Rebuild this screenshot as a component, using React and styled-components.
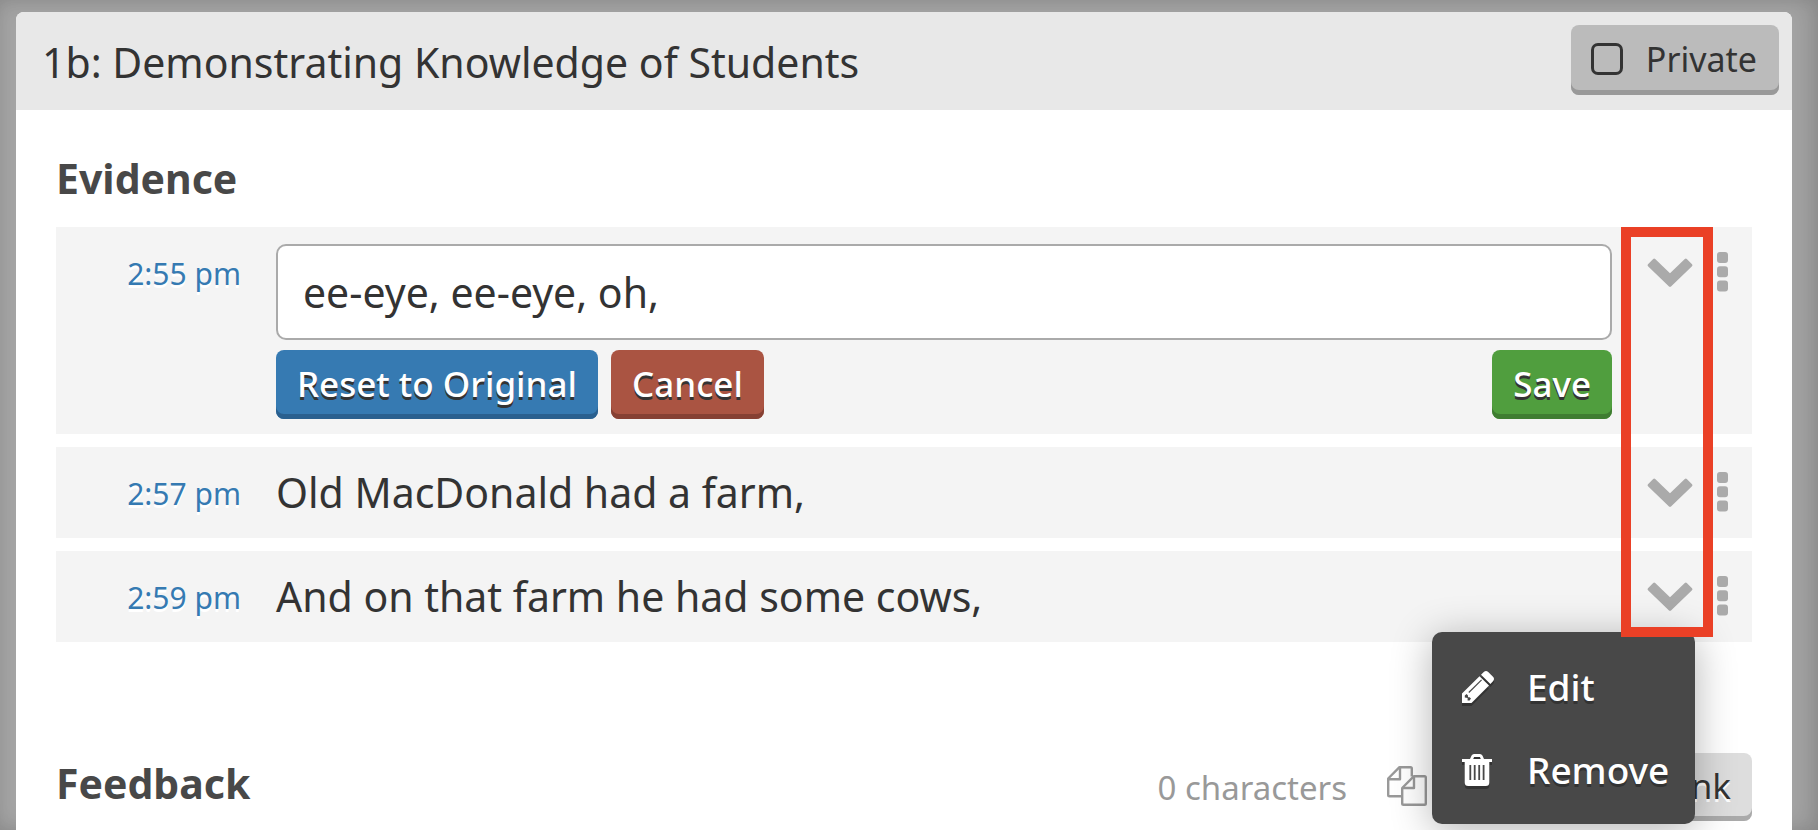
import React, { useState } from "react";
import styled, { createGlobalStyle } from "styled-components";

const GlobalStyle = createGlobalStyle`
  *, *::before, *::after { box-sizing: border-box; }
  body {
    margin: 0;
    background: #a4a4a4;
    color: #333;
    font-family: "Lucida Grande", "Noto Sans", sans-serif;
    font-size: 41px;
    overflow: hidden;
  }
  button, input { font-family: inherit; }
  h1, h2, ul { margin: 0; padding: 0; }
`;

const Backdrop = styled.main`
  height: 100vh;
  overflow: hidden;
  padding: 12px 26px 0 16px;
  box-shadow: inset -8px 0 24px rgba(0, 0, 0, 0.14), inset 0 0 14px rgba(0, 0, 0, 0.06);
`;

const Panel = styled.section`
  min-height: 100vh;
  border-radius: 8px 8px 0 0;
  background: #fff;
`;

const PanelHeader = styled.header`
  display: flex;
  align-items: flex-start;
  justify-content: space-between;
  padding: 13px 13px 11px 26px;
  border-radius: 8px 8px 0 0;
  background: #e8e8e8;
`;

const Title = styled.h1`
  font-size: 41px;
  line-height: 74px;
  font-weight: 400;
`;

const PrivateToggle = styled.label`
  display: flex;
  align-items: center;
  gap: 23px;
  height: 70px;
  padding: 0 22px 2px 20px;
  border-radius: 8px;
  background: #bbb;
  box-shadow: inset 0 -5px 0 #999;
  font-size: 34px;
  line-height: 64px;
`;

const Checkbox = styled.input`
  appearance: none;
  width: 32px;
  height: 32px;
  margin: 0;
  border: 3px solid #333;
  border-radius: 7px;
  &:checked { background: #333; }
`;

const PanelBody = styled.div`
  padding: 41px 40px 0;
`;

const Heading = styled.h2`
  color: #484848;
  font-size: 41px;
  line-height: 54px;
  font-weight: 700;
`;

const EvidenceList = styled.ul`
  position: relative;
  display: flex;
  flex-direction: column;
  gap: 13px;
  margin-top: 22px;
  list-style: none;
`;

const EvidenceRow = styled.li`
  position: relative;
  display: grid;
  grid-template-columns: 185px 1fr 140px;
  background: #f4f4f4;
`;

const Time = styled.a`
  padding: 20px 0 18px;
  color: #357ab2;
  font-size: 30px;
  line-height: 53px;
  text-align: right;
  text-decoration: none;
  text-shadow: 0 3px 0 #fff;
`;

const Entry = styled.div`
  padding: 19px 0 19px 35px;
  line-height: 53px;
`;

const Editor = styled.form`
  display: flex;
  flex-direction: column;
  gap: 10px;
  padding: 17px 0 15px 35px;
`;

const TextField = styled.input`
  width: 100%;
  height: 96px;
  padding: 0 25px;
  border: 2px solid #aaa;
  border-radius: 10px;
  background: #fff;
  color: #333;
  font-size: 41px;
`;

const ButtonRow = styled.div`
  display: flex;
  gap: 13px;
`;

const Button = styled.button`
  height: 69px;
  margin-left: ${(p) => (p.$end ? "auto" : "0")};
  padding: 0 21px 2px;
  border: 0;
  border-radius: 8px;
  background: ${(p) => p.$face};
  box-shadow: inset 0 -5px 0 ${(p) => p.$edge};
  color: #fff;
  font-size: 35px;
  line-height: 64px;
  font-weight: 500;
  text-shadow: 0 3px 0 #333;
`;

const Actions = styled.div`
  display: flex;
  align-items: flex-start;
  gap: 24px;
  padding: 25px 24px 0 35px;
`;

const IconButton = styled.button`
  display: flex;
  padding: 0;
  border: 0;
  background: none;
  color: ${(p) => p.$color || "#aaa"};
`;

const Highlight = styled.li`
  position: absolute;
  z-index: 3;
  top: 0;
  right: 39px;
  bottom: 5px;
  width: 92px;
  border: 10px solid #ea4026;
  pointer-events: none;
`;

const Menu = styled.div`
  position: absolute;
  z-index: 2;
  top: 81px;
  right: 57px;
  width: 263px;
  padding: 13px 0;
  border-radius: 10px;
  background: #484848;
  box-shadow: 0 6px 40px rgba(0, 0, 0, 0.3);
`;

const MenuItem = styled.button`
  display: grid;
  grid-template-columns: 65px 1fr;
  align-items: center;
  width: 100%;
  padding: 0 0 0 30px;
  border: 0;
  background: none;
  color: #fff;
  font-size: 37px;
  line-height: 83px;
  font-weight: 500;
  text-align: left;
  text-shadow: 0 3px 0 #333;
  svg { filter: drop-shadow(0 3px 0 #333); }
`;

const FeedbackBar = styled.div`
  display: flex;
  align-items: flex-start;
  margin-top: 111px;
`;

const FeedbackHeading = styled(Heading)`
  flex: 1;
  line-height: 60px;
`;

const CharacterCount = styled.span`
  color: #999;
  font-size: 33px;
  line-height: 70px;
`;

const CopyButton = styled(IconButton)`
  margin: 13px 13px 0 40px;
`;

const LinkButton = styled.button`
  width: 312px;
  height: 68px;
  padding: 0 21px 2px;
  border: 0;
  border-radius: 8px;
  background: #ddd;
  box-shadow: inset 0 -5px 0 #aaa;
  color: #333;
  font-size: 35px;
  line-height: 64px;
  text-align: right;
  text-shadow: 0 3px 0 #fff;
`;

const ChevronIcon = () => (
  <svg width="46" height="41" viewBox="0 0 46 41" fill="currentColor" aria-hidden="true">
    <path d="M22 34.600 1 14.2Q0 13.2 1 12.2L6.200 6.900Q7.200 5.900 8.200 6.900L23 21.300 37.800 6.900Q38.800 5.900 39.800 6.900L45 12.200Q46 13.200 45 14.200L24 34.600Q23 35.500 22 34.600Z" />
  </svg>
);

const DotsIcon = () => (
  <svg width="11" height="40" viewBox="0 0 11 40" fill="currentColor" aria-hidden="true">
    <rect width="11" height="11" rx="3" />
    <rect y="14.300" width="11" height="11" rx="3" />
    <rect y="28.600" width="11" height="11" rx="3" />
  </svg>
);

const PencilIcon = () => (
  <svg width="32" height="32" viewBox="0 0 32 32" aria-hidden="true">
    <path fill="#fff" d="M0 32V22.500L17.500 5.200 27 14.600 9.500 32ZM19 3.700 21.800 1Q24 -1 26.200 1L31 5.800Q33 8 31 10.200L28.400 13Z" />
    <path fill="none" stroke="#484848" strokeWidth="1.200" d="M6.800 21.500 19.600 8.900" />
    <path fill="#484848" d="M2.800 24.600 4.600 23 6 24.600V26.200H7.600L9 27.600 7.600 29.400H5.600V27L2.800 26.400Z" />
  </svg>
);

const TrashIcon = () => (
  <svg width="30" height="32" viewBox="0 0 30 32" aria-hidden="true">
    <path fill="#fff" fillRule="evenodd" d="M0 5H8L9.600 1.500Q10.400 0 12 0H18Q19.600 0 20.400 1.500L22 5H30V8H27.300V28.500Q27.300 32 23.800 32H6.200Q2.700 32 2.700 28.500V8H0ZM11.200 5H18.800L17.900 3H12.100Z" />
    <path stroke="#484848" strokeWidth="1.800" d="M8.300 11V26M12.700 11V26M17.200 11V26M21.600 11V26" />
  </svg>
);

const CopyIcon = () => (
  <svg width="40" height="40" viewBox="0 0 40 40" fill="none" stroke="currentColor" strokeWidth="2.400" strokeLinejoin="round" aria-hidden="true">
    <path d="M15 30.300H2.500Q1.200 30.300 1.200 29V12.500L12.500 1.200H23.500Q24.800 1.200 24.800 2.500V10.500" />
    <path d="M1.200 13.300H13V1.200M15.500 22H27V10" />
    <path d="M27 10.200H37.500Q38.800 10.200 38.800 11.500V37.500Q38.800 38.800 37.500 38.800H16.500Q15.200 38.800 15.200 37.500V22Z" />
  </svg>
);

const RowActions = () => (
  <Actions>
    <IconButton type="button" aria-label="Open actions"><ChevronIcon /></IconButton>
    <IconButton type="button" aria-label="Drag to reorder"><DotsIcon /></IconButton>
  </Actions>
);

export default function App() {
  const [text, setText] = useState("ee-eye, ee-eye, oh,");

  return (
    <>
      <GlobalStyle />
      <Backdrop>
        <Panel>
          <PanelHeader>
            <Title>1b: Demonstrating Knowledge of Students</Title>
            <PrivateToggle>
              <Checkbox type="checkbox" />
              Private
            </PrivateToggle>
          </PanelHeader>
          <PanelBody>
            <Heading>Evidence</Heading>
            <EvidenceList>
              <EvidenceRow>
                <Time href="#evidence-1">2:55 pm</Time>
                <Editor onSubmit={(e) => e.preventDefault()}>
                  <TextField
                    type="text"
                    aria-label="Evidence text"
                    value={text}
                    onChange={(e) => setText(e.target.value)}
                  />
                  <ButtonRow>
                    <Button type="button" $face="#367ab2" $edge="#2a608f">Reset to Original</Button>
                    <Button type="button" $face="#aa5442" $edge="#864033">Cancel</Button>
                    <Button type="submit" $face="#509e3e" $edge="#3f7d31" $end>Save</Button>
                  </ButtonRow>
                </Editor>
                <RowActions />
              </EvidenceRow>
              <EvidenceRow>
                <Time href="#evidence-2">2:57 pm</Time>
                <Entry>Old MacDonald had a farm,</Entry>
                <RowActions />
              </EvidenceRow>
              <EvidenceRow>
                <Time href="#evidence-3">2:59 pm</Time>
                <Entry>And on that farm he had some cows,</Entry>
                <RowActions />
                <Menu>
                  <MenuItem type="button"><PencilIcon />Edit</MenuItem>
                  <MenuItem type="button"><TrashIcon />Remove</MenuItem>
                </Menu>
              </EvidenceRow>
              <Highlight aria-hidden="true" />
            </EvidenceList>
            <FeedbackBar>
              <FeedbackHeading>Feedback</FeedbackHeading>
              <CharacterCount>0 characters</CharacterCount>
              <CopyButton type="button" aria-label="Copy" $color="#999"><CopyIcon /></CopyButton>
              <LinkButton type="button">Link</LinkButton>
            </FeedbackBar>
          </PanelBody>
        </Panel>
      </Backdrop>
    </>
  );
}
